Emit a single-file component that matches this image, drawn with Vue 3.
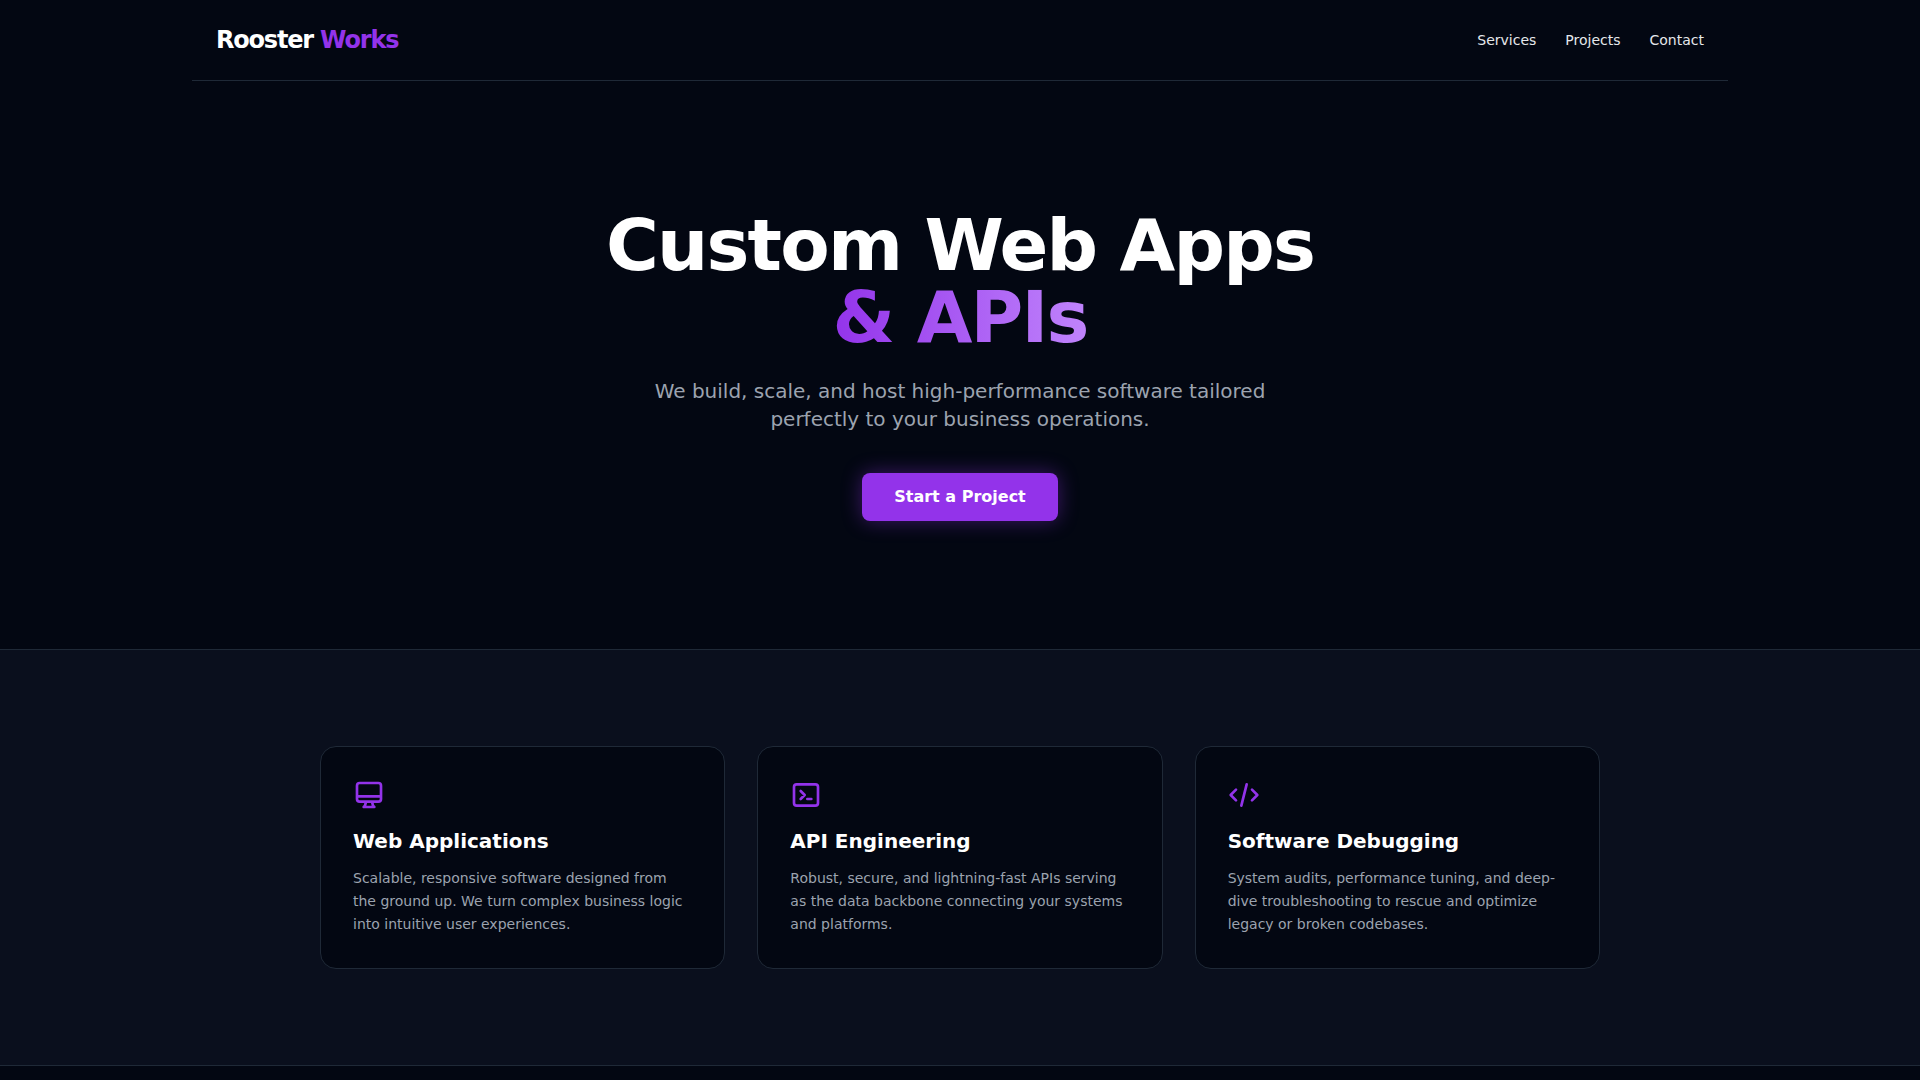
<script setup>
const links = [
  { label: 'Services', href: '#services' },
  { label: 'Projects', href: '#projects' },
  { label: 'Contact', href: '#contact' },
]

const services = [
  {
    title: 'Web Applications',
    text: 'Scalable, responsive software designed from the ground up. We turn complex business logic into intuitive user experiences.',
    icon: 'M9.75 17L9 20l-1 1h8l-1-1-.75-3M3 13h18M5 17h14a2 2 0 002-2V5a2 2 0 00-2-2H5a2 2 0 00-2 2v10a2 2 0 002 2z',
  },
  {
    title: 'API Engineering',
    text: 'Robust, secure, and lightning-fast APIs serving as the data backbone connecting your systems and platforms.',
    icon: 'M8 9l3 3-3 3m5 0h3M5 20h14a2 2 0 002-2V6a2 2 0 00-2-2H5a2 2 0 00-2 2v12a2 2 0 002 2z',
  },
  {
    title: 'Software Debugging',
    text: 'System audits, performance tuning, and deep-dive troubleshooting to rescue and optimize legacy or broken codebases.',
    icon: 'M10 20l4-16m4 4l4 4-4 4M6 16l-4-4 4-4',
  },
]
</script>

<template>
  <div class="page">
    <header class="header">
      <div class="logo">Rooster <span class="accent">Works</span></div>
      <nav class="nav">
        <a v-for="link in links" :key="link.label" :href="link.href">{{ link.label }}</a>
      </nav>
    </header>

    <main>
      <section class="hero">
        <h1>Custom Web Apps<br /><span class="gradient">&amp; APIs</span></h1>
        <p>We build, scale, and host high-performance software tailored perfectly to your business operations.</p>
        <a class="cta" href="#contact">Start a Project</a>
      </section>

      <section id="services" class="services">
        <div class="grid">
          <article v-for="service in services" :key="service.title" class="card">
            <svg class="icon" viewBox="0 0 24 24" aria-hidden="true">
              <path :d="service.icon" />
            </svg>
            <h2>{{ service.title }}</h2>
            <p>{{ service.text }}</p>
          </article>
        </div>
      </section>
    </main>
  </div>
</template>

<style>
body {
  margin: 0;
  background: #030712;
}
</style>

<style scoped>
.page,
.page * {
  box-sizing: border-box;
}

.page {
  min-height: 100vh;
  background: #030712;
  color: #e5e7eb;
  font-family: "DejaVu Sans", sans-serif;
  font-size: 16px;
  line-height: 24px;
}

h1,
h2,
p {
  margin: 0;
}

a {
  color: inherit;
  text-decoration: none;
}

.header {
  display: flex;
  align-items: center;
  justify-content: space-between;
  max-width: 1536px;
  margin: 0 auto;
  padding: 24px;
  border-bottom: 1px solid #1f2937;
}

.logo {
  color: #fff;
  font-size: 24px;
  font-weight: 700;
  line-height: 32px;
  letter-spacing: -0.05em;
}

.accent {
  color: #9333ea;
}

.nav {
  display: flex;
  gap: 29px;
  font-size: 14px;
  line-height: 20px;
}

.hero {
  display: flex;
  flex-direction: column;
  align-items: center;
  padding: 128px 24px;
  text-align: center;
}

.hero h1 {
  margin-bottom: 24px;
  color: #fff;
  font-size: 72px;
  font-weight: 800;
  line-height: 72px;
  letter-spacing: -0.025em;
}

.gradient {
  background: linear-gradient(to right, #9333ea, #c084fc);
  background-clip: text;
  -webkit-background-clip: text;
  color: transparent;
}

.hero p {
  max-width: 672px;
  margin-bottom: 40px;
  color: #9ca3af;
  font-size: 20px;
  line-height: 28px;
}

.cta {
  padding: 12px 32px;
  border-radius: 8px;
  background: #9333ea;
  box-shadow: 0 0 20px rgba(147, 51, 234, 0.4);
  color: #fff;
  font-weight: 600;
}

.services {
  padding: 96px 24px;
  border-top: 1px solid #1f2937;
  border-bottom: 1px solid #1f2937;
  background: rgba(17, 24, 39, 0.5);
}

.grid {
  display: grid;
  grid-template-columns: repeat(3, minmax(0, 1fr));
  gap: 32px;
  max-width: 1280px;
  margin: 0 auto;
}

.card {
  padding: 32px;
  border: 1px solid #1f2937;
  border-radius: 16px;
  background: #030712;
}

.icon {
  display: block;
  width: 32px;
  height: 32px;
  margin-bottom: 16px;
  fill: none;
  stroke: #9333ea;
  stroke-width: 2;
  stroke-linecap: round;
  stroke-linejoin: round;
}

.card h2 {
  margin-bottom: 12px;
  color: #fff;
  font-size: 20px;
  font-weight: 700;
  line-height: 28px;
}

.card p {
  color: #9ca3af;
  font-size: 14px;
  line-height: 23px;
}

@media (max-width: 900px) {
  .grid {
    grid-template-columns: 1fr;
  }
}
</style>
